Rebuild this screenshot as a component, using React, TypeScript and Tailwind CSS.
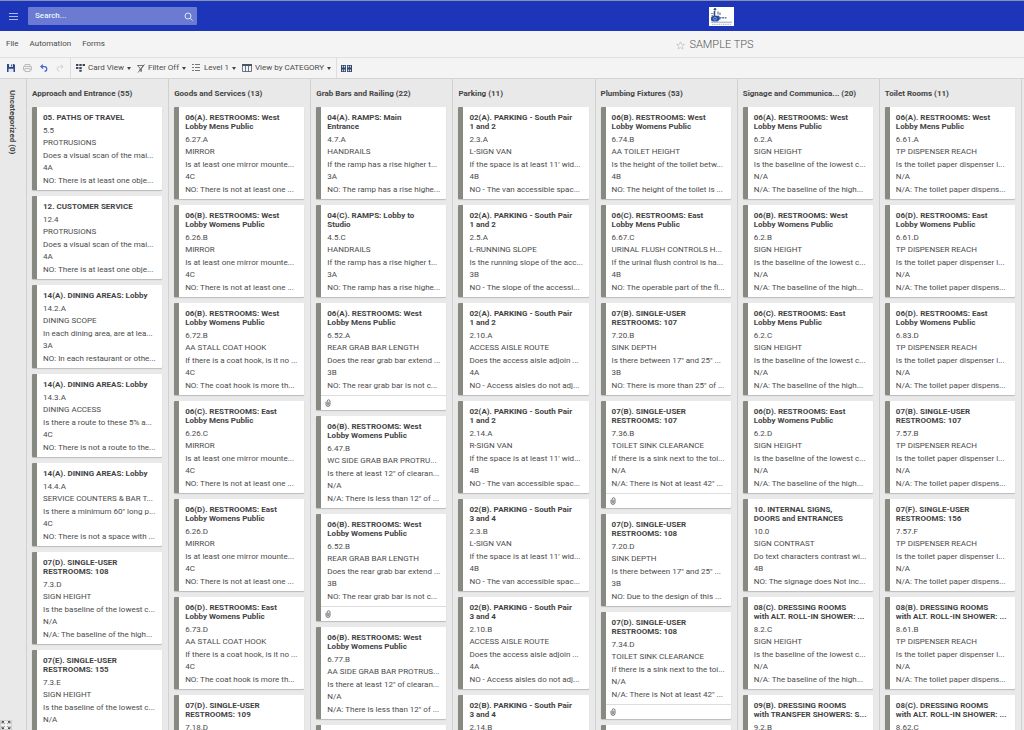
import { ReactNode } from "react"

type Item = {
    title: string
    lines: string[]
    attachment?: boolean
}

type Column = {
    name: string
    count: number
    items: Item[]
}

const card = (title: string, ...lines: string[]): Item => ({ title, lines })
const cardWithFile = (title: string, ...lines: string[]): Item => ({ title, lines, attachment: true })

const columns: Column[] = [
    {
        name: "Approach and Entrance",
        count: 55,
        items: [
            card("05. PATHS OF TRAVEL", "5.5", "PROTRUSIONS", "Does a visual scan of the mai...", "4A", "NO: There is at least one obje..."),
            card("12. CUSTOMER SERVICE", "12.4", "PROTRUSIONS", "Does a visual scan of the mai...", "4A", "NO: There is at least one obje..."),
            card("14(A). DINING AREAS: Lobby", "14.2.A", "DINING SCOPE", "In each dining area, are at lea...", "3A", "NO: In each restaurant or othe..."),
            card("14(A). DINING AREAS: Lobby", "14.3.A", "DINING ACCESS", "Is there a route to these 5% a...", "4C", "NO: There is not a route to the..."),
            card("14(A). DINING AREAS: Lobby", "14.4.A", "SERVICE COUNTERS & BAR T...", "Is there a minimum 60\" long p...", "4C", "NO: There is not a space with ..."),
            card("07(D). SINGLE-USER\nRESTROOMS: 108", "7.3.D", "SIGN HEIGHT", "Is the baseline of the lowest c...", "N/A", "N/A: The baseline of the high..."),
            card("07(E). SINGLE-USER\nRESTROOMS: 155", "7.3.E", "SIGN HEIGHT", "Is the baseline of the lowest c...", "N/A"),
        ],
    },
    {
        name: "Goods and Services",
        count: 13,
        items: [
            card("06(A). RESTROOMS: West\nLobby Mens Public", "6.27.A", "MIRROR", "Is at least one mirror mounte...", "4C", "NO: There is not at least one ..."),
            card("06(B). RESTROOMS: West\nLobby Womens Public", "6.26.B", "MIRROR", "Is at least one mirror mounte...", "4C", "NO: There is not at least one ..."),
            card("06(B). RESTROOMS: West\nLobby Womens Public", "6.72.B", "AA STALL COAT HOOK", "If there is a coat hook, is it no ...", "4C", "NO: The coat hook is more th..."),
            card("06(C). RESTROOMS: East\nLobby Mens Public", "6.26.C", "MIRROR", "Is at least one mirror mounte...", "4C", "NO: There is not at least one ..."),
            card("06(D). RESTROOMS: East\nLobby Womens Public", "6.26.D", "MIRROR", "Is at least one mirror mounte...", "4C", "NO: There is not at least one ..."),
            card("06(D). RESTROOMS: East\nLobby Womens Public", "6.73.D", "AA STALL COAT HOOK", "If there is a coat hook, is it no ...", "4C", "NO: The coat hook is more th..."),
            card("07(D). SINGLE-USER\nRESTROOMS: 109", "7.18.D"),
        ],
    },
    {
        name: "Grab Bars and Railing",
        count: 22,
        items: [
            card("04(A). RAMPS: Main\nEntrance", "4.7.A", "HANDRAILS", "If the ramp has a rise higher t...", "3A", "NO: The ramp has a rise highe..."),
            card("04(C). RAMPS: Lobby to\nStudio", "4.5.C", "HANDRAILS", "If the ramp has a rise higher t...", "3A", "NO: The ramp has a rise highe..."),
            cardWithFile("06(A). RESTROOMS: West\nLobby Mens Public", "6.52.A", "REAR GRAB BAR LENGTH", "Does the rear grab bar extend ...", "3B", "NO: The rear grab bar is not c..."),
            card("06(B). RESTROOMS: West\nLobby Womens Public", "6.47.B", "WC SIDE GRAB BAR PROTRU...", "Is there at least 12\" of clearan...", "N/A", "N/A: There is less than 12\" of ..."),
            cardWithFile("06(B). RESTROOMS: West\nLobby Womens Public", "6.52.B", "REAR GRAB BAR LENGTH", "Does the rear grab bar extend ...", "3B", "NO: The rear grab bar is not c..."),
            card("06(B). RESTROOMS: West\nLobby Womens Public", "6.77.B", "AA SIDE GRAB BAR PROTRUS...", "Is there at least 12\" of clearan...", "N/A", "N/A: There is less than 12\" of ..."),
            card(""),
        ],
    },
    {
        name: "Parking",
        count: 11,
        items: [
            card("02(A). PARKING - South Pair\n1 and 2", "2.3.A", "L-SIGN VAN", "If the space is at least 11' wid...", "4B", "NO - The van accessible spac..."),
            card("02(A). PARKING - South Pair\n1 and 2", "2.5.A", "L-RUNNING SLOPE", "Is the running slope of the acc...", "3B", "NO - The slope of the accessi..."),
            card("02(A). PARKING - South Pair\n1 and 2", "2.10.A", "ACCESS AISLE ROUTE", "Does the access aisle adjoin ...", "4A", "NO - Access aisles do not adj..."),
            card("02(A). PARKING - South Pair\n1 and 2", "2.14.A", "R-SIGN VAN", "If the space is at least 11' wid...", "4B", "NO - The van accessible spac..."),
            card("02(B). PARKING - South Pair\n3 and 4", "2.3.B", "L-SIGN VAN", "If the space is at least 11' wid...", "4B", "NO - The van accessible spac..."),
            card("02(B). PARKING - South Pair\n3 and 4", "2.10.B", "ACCESS AISLE ROUTE", "Does the access aisle adjoin ...", "4A", "NO - Access aisles do not adj..."),
            card("02(B). PARKING - South Pair\n3 and 4", "2.14.B"),
        ],
    },
    {
        name: "Plumbing Fixtures",
        count: 53,
        items: [
            card("06(B). RESTROOMS: West\nLobby Womens Public", "6.74.B", "AA TOILET HEIGHT", "Is the height of the toilet betw...", "4B", "NO: The height of the toilet is ..."),
            card("06(C). RESTROOMS: East\nLobby Mens Public", "6.67.C", "URINAL FLUSH CONTROLS H...", "If the urinal flush control is ha...", "4B", "NO: The operable part of the fl..."),
            card("07(B). SINGLE-USER\nRESTROOMS: 107", "7.20.B", "SINK DEPTH", "Is there between 17\" and 25\" ...", "3B", "NO: There is more than 25\" of ..."),
            cardWithFile("07(B). SINGLE-USER\nRESTROOMS: 107", "7.36.B", "TOILET SINK CLEARANCE", "If there is a sink next to the toi...", "N/A", "N/A: There is Not at least 42\" ..."),
            card("07(D). SINGLE-USER\nRESTROOMS: 108", "7.20.D", "SINK DEPTH", "Is there between 17\" and 25\" ...", "3B", "NO: Due to the design of this ..."),
            cardWithFile("07(D). SINGLE-USER\nRESTROOMS: 108", "7.34.D", "TOILET SINK CLEARANCE", "If there is a sink next to the toi...", "N/A", "N/A: There is Not at least 42\" ..."),
            card(""),
        ],
    },
    {
        name: "Signage and Communica...",
        count: 20,
        items: [
            card("06(A). RESTROOMS: West\nLobby Mens Public", "6.2.A", "SIGN HEIGHT", "Is the baseline of the lowest c...", "N/A", "N/A: The baseline of the high..."),
            card("06(B). RESTROOMS: West\nLobby Womens Public", "6.2.B", "SIGN HEIGHT", "Is the baseline of the lowest c...", "N/A", "N/A: The baseline of the high..."),
            card("06(C). RESTROOMS: East\nLobby Mens Public", "6.2.C", "SIGN HEIGHT", "Is the baseline of the lowest c...", "N/A", "N/A: The baseline of the high..."),
            card("06(D). RESTROOMS: East\nLobby Womens Public", "6.2.D", "SIGN HEIGHT", "Is the baseline of the lowest c...", "N/A", "N/A: The baseline of the high..."),
            card("10. INTERNAL SIGNS,\nDOORS and ENTRANCES", "10.0", "SIGN CONTRAST", "Do text characters contrast wi...", "4B", "NO: The signage does Not inc..."),
            card("08(C). DRESSING ROOMS\nwith ALT. ROLL-IN SHOWER: ...", "8.2.C", "SIGN HEIGHT", "Is the baseline of the lowest c...", "N/A", "N/A: The baseline of the high..."),
            card("09(B). DRESSING ROOMS\nwith TRANSFER SHOWERS: S...", "9.2.B"),
        ],
    },
    {
        name: "Toilet Rooms",
        count: 11,
        items: [
            card("06(A). RESTROOMS: West\nLobby Mens Public", "6.61.A", "TP DISPENSER REACH", "Is the toilet paper dispenser l...", "N/A", "N/A: The toilet paper dispens..."),
            card("06(D). RESTROOMS: East\nLobby Womens Public", "6.61.D", "TP DISPENSER REACH", "Is the toilet paper dispenser l...", "N/A", "N/A: The toilet paper dispens..."),
            card("06(D). RESTROOMS: East\nLobby Womens Public", "6.83.D", "TP DISPENSER REACH", "Is the toilet paper dispenser l...", "N/A", "N/A: The toilet paper dispens..."),
            card("07(B). SINGLE-USER\nRESTROOMS: 107", "7.57.B", "TP DISPENSER REACH", "Is the toilet paper dispenser l...", "N/A", "N/A: The toilet paper dispens..."),
            card("07(F). SINGLE-USER\nRESTROOMS: 156", "7.57.F", "TP DISPENSER REACH", "Is the toilet paper dispenser l...", "N/A", "N/A: The toilet paper dispens..."),
            card("08(B). DRESSING ROOMS\nwith ALT. ROLL-IN SHOWER: ...", "8.61.B", "TP DISPENSER REACH", "Is the toilet paper dispenser l...", "N/A", "N/A: The toilet paper dispens..."),
            card("08(C). DRESSING ROOMS\nwith ALT. ROLL-IN SHOWER: ...", "8.62.C"),
        ],
    },
]

function Paperclip() {
    return (
        <svg width="6" height="8" viewBox="0 0 6 8" fill="none" stroke="#666" strokeWidth="0.9">
            <path d="M1 2.8V5.4a2 2 0 0 0 4 0V2.2a1.4 1.4 0 0 0-2.8 0v3a.8.8 0 0 0 1.6 0V2.8" />
        </svg>
    )
}

function Card({ item }: { item: Item }) {
    return (
        <li className="shrink-0 rounded-[1px] border-l-[5px] border-[#868a80] bg-white shadow-[0_1px_1px_rgba(0,0,0,0.2)]">
            <div className="min-h-[83px] overflow-hidden pt-1.5 pb-[3px] pl-1.5 text-[8px] whitespace-pre text-[#4c4c4c]">
                <h3 className="mb-0.5 text-[8px] leading-[9px] font-bold text-[#444]">{item.title}</h3>
                {item.lines.map((line, i) => (
                    <p key={i} className={i % 2 ? "leading-[12px]" : "leading-[13px]"}>{line}</p>
                ))}
            </div>
            {item.attachment && (
                <div className="flex h-[15px] items-center border-t border-[#ddd] pl-1">
                    <Paperclip />
                </div>
            )}
        </li>
    )
}

function BoardColumn({ column }: { column: Column }) {
    return (
        <section className="flex min-w-0 flex-1 flex-col overflow-hidden border-l border-[#d0d0d0] pr-1.5 pl-[5px]">
            <h2 className="flex h-7 shrink-0 items-center pt-px text-[8px] font-bold whitespace-nowrap text-[#444]">
                {column.name} ({column.count})
            </h2>
            <ul className="flex flex-col gap-1.5">
                {column.items.map((item, i) => <Card key={i} item={item} />)}
            </ul>
        </section>
    )
}

function Caret() {
    return (
        <svg width="4" height="3" viewBox="0 0 4 3" fill="#444">
            <path d="M0 0h4L2 3z" />
        </svg>
    )
}

function ToolButton({ icon, label }: { icon: ReactNode; label: string }) {
    return (
        <button className="flex items-center gap-[3px] whitespace-nowrap">
            {icon}
            {label}
            <Caret />
        </button>
    )
}

export default function App() {
    return (
        <div className="flex h-screen flex-col overflow-hidden bg-[#e9e9e9] font-[Roboto,sans-serif] text-[8px] text-[#4c4c4c]">
            <header className="flex h-[31px] shrink-0 items-center border-t border-[#8791b5] bg-[#1d35b9] pl-2">
                <div className="flex w-[410px] shrink-0 items-center gap-[9px]">
                    <button aria-label="Menu">
                        <svg width="11" height="10" viewBox="0 0 11 10" stroke="#a9bdf0" strokeWidth="1">
                            <path d="M1 2.5h9M1 5.5h9M1 8.5h9" />
                        </svg>
                    </button>
                    <label className="flex h-[18px] w-[169px] items-center rounded-[1px] bg-[#6c7bd2] pr-1 pl-[7px]">
                        <input type="text" aria-label="Search" placeholder="Search..." className="min-w-0 flex-1 bg-transparent font-medium outline-none placeholder:text-[#eaf6fc]" />
                        <svg width="9" height="9" viewBox="0 0 9 9" fill="none" stroke="#d8e6fa" strokeWidth="1">
                            <circle cx="4" cy="4" r="3" />
                            <path d="M6.2 6.2 8.6 8.6" />
                        </svg>
                    </label>
                </div>
                <div className="flex flex-1 justify-center">
                    <svg width="25" height="19" viewBox="0 0 25 19" aria-label="Logo">
                        <rect width="25" height="19" fill="#fff" />
                        <circle cx="6" cy="2.2" r="1.3" fill="#35507f" />
                        <path d="M5.5 4v5.5h4l1.5 3" fill="none" stroke="#35507f" strokeWidth="1.6" />
                        <path d="M2 6.5h2.5M2.5 8.5h2" stroke="#7c9aae" />
                        <path d="M9 4.5v3M11 5.5v2.5" stroke="#5f7b9e" strokeWidth="1.2" />
                        <rect x="2" y="9" width="8" height="5.5" rx="2" fill="#294ca6" />
                        <circle cx="6" cy="11.7" r="1.4" fill="none" stroke="#8fa6d6" strokeWidth=".8" />
                        <path d="M10.5 10.7h7" stroke="#5f7fb0" strokeWidth="1.6" strokeDasharray="2 .6" />
                        <path d="M2 15.2h21" stroke="#7e93a8" strokeWidth=".8" />
                        <path d="M3 17.3h19" stroke="#9dadc0" strokeWidth=".9" strokeDasharray="1.5 .7" />
                    </svg>
                </div>
            </header>

            <div className="flex h-[27px] shrink-0 items-center border-b border-[#e0e0e0] bg-[#f4f4f4] pl-1.5">
                <nav className="flex w-[400px] shrink-0 gap-[11px]">
                    <button>File</button>
                    <button>Automation</button>
                    <button>Forms</button>
                </nav>
                <div className="flex flex-1 items-center justify-center gap-1 pt-0.5 text-[11px] text-[#555]">
                    <svg width="9" height="9" viewBox="0 0 9 9" fill="none" stroke="#c4c4c4" strokeWidth=".8">
                        <path d="M4.5.8l1.1 2.5 2.7.2-2 1.8.6 2.7-2.4-1.4L2.1 8l.6-2.7-2-1.8 2.7-.2z" />
                    </svg>
                    <h1 className="font-light">SAMPLE TPS</h1>
                </div>
            </div>

            <div className="flex h-[21px] shrink-0 items-stretch border-b border-[#d4d4d4] bg-[#f4f4f4]">
                <div className="flex items-center gap-2 border-r border-[#ddd] pr-1.5 pl-[7px]">
                    <button aria-label="Save">
                        <svg width="8" height="8" viewBox="0 0 8 8">
                            <path d="M0 0h7l1 1v7H0z" fill="#2f4a86" />
                            <path d="M2 0h4v3H2zM1.5 4.8h5V8h-5z" fill="#dfe6f2" />
                            <path d="M4.2.5h1v2h-1z" fill="#2f4a86" />
                        </svg>
                    </button>
                    <button aria-label="Print">
                        <svg width="9" height="8" viewBox="0 0 9 8" fill="none" stroke="#bcbcbc">
                            <path d="M2 2.5V.5h5v2M2 6H.5V2.5h8V6H7M2 4.5h5v3H2z" />
                        </svg>
                    </button>
                    <button aria-label="Undo">
                        <svg width="8" height="8" viewBox="0 0 8 8" fill="none" stroke="#3f68c8" strokeWidth="1.2">
                            <path d="M3 .6.9 2.6 3 4.6M1.2 2.6h3.3a2.2 2.2 0 0 1 0 4.6" />
                        </svg>
                    </button>
                    <button aria-label="Redo">
                        <svg width="8" height="8" viewBox="0 0 8 8" fill="none" stroke="#d2d2d2" strokeWidth="1">
                            <path d="M5 .6 7.1 2.6 5 4.6M6.8 2.6H3.5a2.2 2.2 0 0 0 0 4.6" />
                        </svg>
                    </button>
                </div>
                <div className="flex items-center gap-1.5 border-r border-[#ddd] px-[5px]">
                    <ToolButton
                        label="Card View"
                        icon={
                            <svg width="9" height="8" viewBox="0 0 9 8" fill="#3d4658">
                                <path d="M0 0h2.4v2H0zM3.3 0h2.4v2H3.3zM6.6 0H9v2H6.6zM0 2.9h2.4v2H0zM3.3 2.9h2.4v2H3.3zM3.3 5.8h2.4v2H3.3z" />
                            </svg>
                        }
                    />
                    <ToolButton
                        label="Filter Off"
                        icon={
                            <svg width="8" height="9" viewBox="0 0 8 9" fill="none" stroke="#555" strokeWidth=".8">
                                <path d="M.5 1.5h6L4.4 4.2v3.4L3 6.6V4.2zM7.5.4 1 8.6" />
                            </svg>
                        }
                    />
                    <ToolButton
                        label="Level 1"
                        icon={
                            <svg width="9" height="8" viewBox="0 0 9 8" stroke="#777">
                                <path d="M0 .5h2M3 .5h5M0 3.5h2M3 3.5h5M0 6.5h2M3 6.5h5" />
                            </svg>
                        }
                    />
                    <ToolButton
                        label="View by CATEGORY"
                        icon={
                            <svg width="10" height="8" viewBox="0 0 10 8" fill="none" stroke="#4a5568">
                                <path d="M0 1h10" strokeWidth="2" />
                                <path d="M.5 1v6.5h9V1M3.5 1v6.5M6.5 1v6.5" strokeWidth=".8" />
                            </svg>
                        }
                    />
                </div>
                <button aria-label="Fit columns" className="px-1">
                    <svg width="11" height="7" viewBox="0 0 11 7">
                        <path d="M0 0h5v7H0zM6 0h5v7H6z" fill="#34456e" />
                        <path d="M1 .8h1.2v1.6H1zM3 .8h1.2v1.6H3zM1 4.6h1.2v1.6H1zM3 4.6h1.2v1.6H3zM6.8.8H8v1.6H6.8zM8.8.8H10v1.6H8.8zM6.8 4.6H8v1.6H6.8zM8.8 4.6H10v1.6H8.8z" fill="#cdd6ea" />
                    </svg>
                </button>
            </div>

            <main className="flex min-h-0 flex-1 pr-[2px]">
                <aside className="flex w-[26px] shrink-0 flex-col items-center justify-between pt-[11px] pr-[2px]">
                    <h2 className="text-[8px] leading-3 font-bold text-[#444] [writing-mode:vertical-rl]">Uncategorized (0)</h2>
                    <button aria-label="Full screen" className="self-start border border-[#d0d0d0] bg-[#f0f0f0]">
                        <svg width="10" height="8" viewBox="0 0 10 8" fill="none" stroke="#444" strokeWidth=".9">
                            <path d="M1 2.5V.5h2M1 .5l2.5 2M9 2.5V.5H7M9 .5l-2.5 2M1 5.5v2h2M1 7.5l2.5-2M9 5.5v2H7M9 7.5l-2.5-2" />
                        </svg>
                    </button>
                </aside>
                <div className="flex min-w-0 flex-1 border-r border-[#d0d0d0]">
                    {columns.map((column) => <BoardColumn key={column.name} column={column} />)}
                </div>
            </main>
        </div>
    )
}
